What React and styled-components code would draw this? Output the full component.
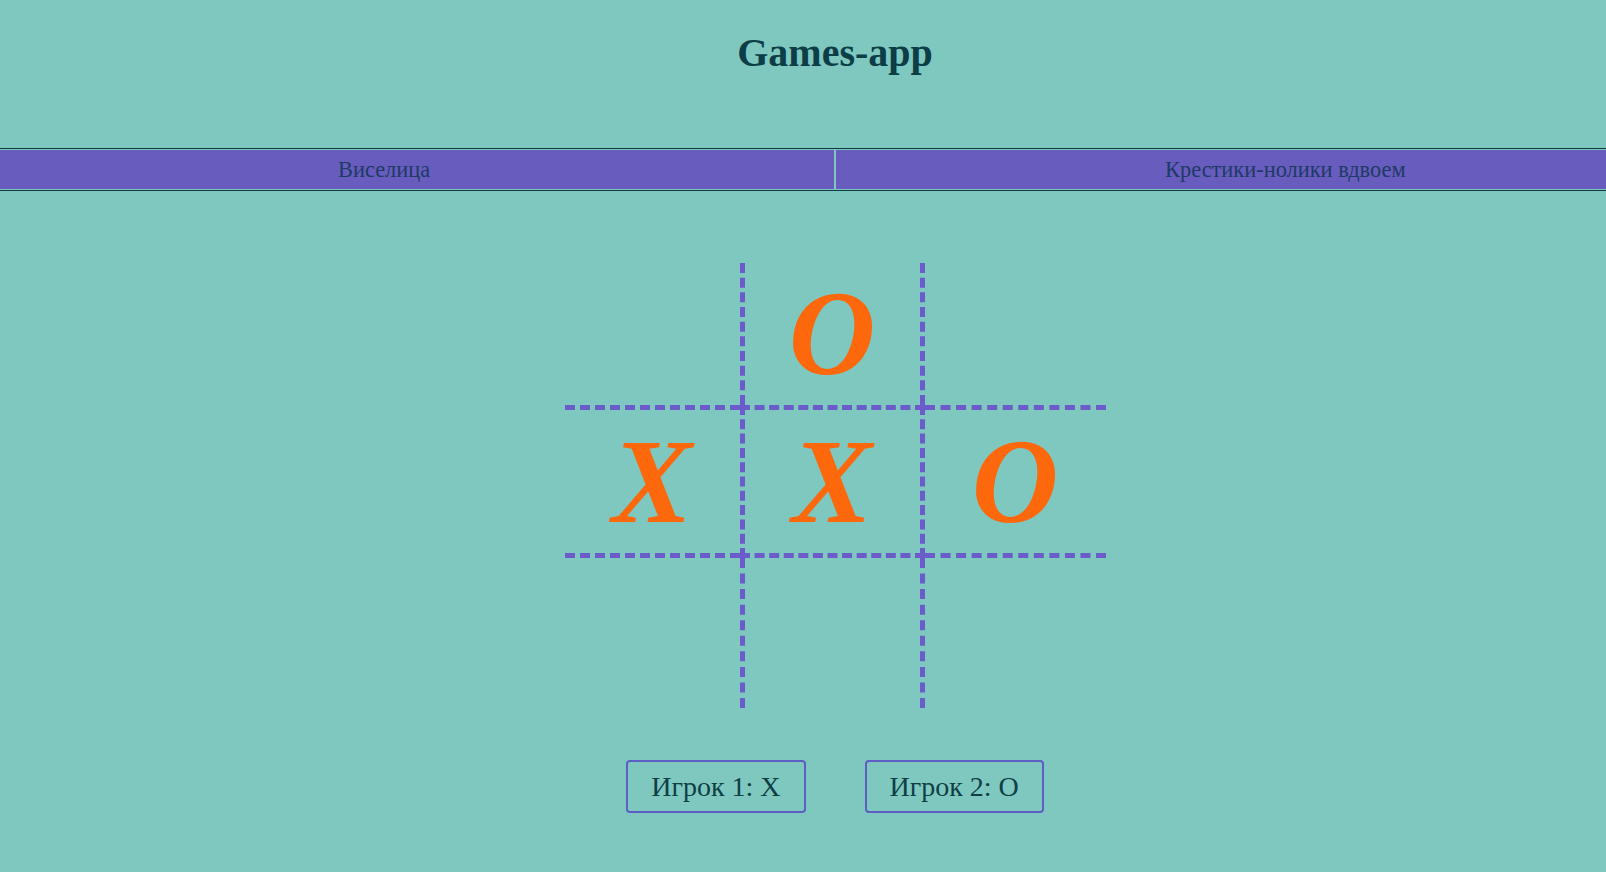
import React, { useState } from "react";
import styled, { createGlobalStyle } from "styled-components";

const GlobalStyle = createGlobalStyle`
  html, body {
    margin: 0;
    padding: 0;
    overflow: hidden;
    background-color: #7ec8c0;
  }
  body {
    font-family: "Liberation Serif", "Times New Roman", serif;
  }
`;

const Page = styled.div`
  width: 1670px;
  min-height: 872px;
  display: flex;
  flex-direction: column;
  align-items: center;
`;

const Header = styled.header`
  box-sizing: border-box;
  width: 100%;
  height: 148px;
  padding-top: 30px;
  text-align: center;
`;

const Title = styled.h1`
  margin: 0;
  font-size: 40px;
  font-weight: 700;
  line-height: 46px;
  color: #0d3d46;
`;

const Nav = styled.nav`
  box-sizing: border-box;
  width: 100%;
  display: flex;
  gap: 2px;
  padding: 1px 0;
  border-top: 1px solid #0b3b3e;
  border-bottom: 1px solid #0b3b3e;
`;

const NavItem = styled.a`
  flex: 0 0 834px;
  box-sizing: border-box;
  height: 39px;
  padding-left: ${p => p.$indent}px;
  padding-top: 1px;
  background-color: #685cbf;
  color: #1d3b63;
  font-size: 22.4px;
  line-height: 37px;
  cursor: pointer;
`;

const Board = styled.div`
  margin-top: 72px;
  display: grid;
  grid-template-columns: 175px 185px 181px;
  grid-template-rows: 142px 153px 150px;
`;

const Cell = styled.div`
  box-sizing: border-box;
  display: flex;
  align-items: center;
  justify-content: center;
  border-color: #6b5bcb;
  border-style: dashed;
  border-width: ${p => (p.$midRow ? "5px" : "0")} ${p => (p.$midCol ? "5px" : "0")};
  color: #fd680c;
  font-size: 120px;
  font-weight: 700;
  font-style: italic;
  line-height: 1;
  cursor: pointer;
`;

const Players = styled.div`
  margin-top: 52px;
  display: flex;
  gap: 59px;
`;

const PlayerButton = styled.button`
  box-sizing: border-box;
  height: 53px;
  padding: 0 23px;
  background: transparent;
  border: 2px solid #5e5ec4;
  border-radius: 4px;
  color: #0f3e45;
  font-family: "Liberation Serif", "Times New Roman", serif;
  font-size: 28px;
  line-height: 1;
`;

const initialBoard = ["", "O", "", "X", "X", "O", "", "", ""];

const App = () => {
  const [cells] = useState(initialBoard);

  return (
    <>
      <GlobalStyle />
      <Page>
        <Header>
          <Title>Games-app</Title>
        </Header>
        <Nav>
          <NavItem $indent={338}>Виселица</NavItem>
          <NavItem $indent={329}>Крестики-нолики вдвоем</NavItem>
        </Nav>
        <Board>
          {cells.map((value, index) => (
            <Cell
              key={index}
              $midCol={index % 3 === 1}
              $midRow={Math.floor(index / 3) === 1}
            >
              {value}
            </Cell>
          ))}
        </Board>
        <Players>
          <PlayerButton>Игрок 1: X</PlayerButton>
          <PlayerButton>Игрок 2: O</PlayerButton>
        </Players>
      </Page>
    </>
  );
};

export default App;
